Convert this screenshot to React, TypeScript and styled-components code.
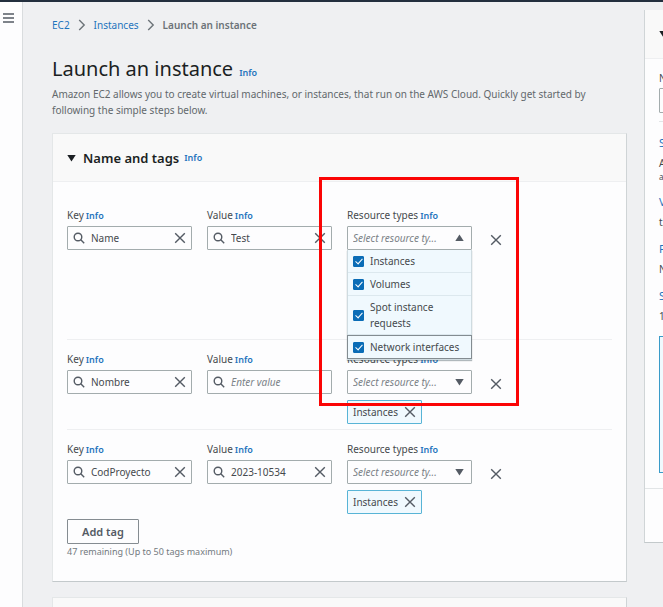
import React, { useState } from "react";
import styled, { createGlobalStyle, css } from "styled-components";

const color = {
  text: "#45494d",
  heading: "#1b1f23",
  muted: "#62686c",
  link: "#1f74bd",
  border: "#a3acad",
  divider: "#eeeff1",
  page: "#eff0f2",
  surface: "#fdfdfe",
  header: "#f9f9f9",
};

const GlobalStyle = createGlobalStyle`
  *, *::before, *::after { box-sizing: border-box; }
  html, body, #root { min-height: 100vh; }
  body {
    margin: 0;
    overflow: hidden;
    background: ${color.page};
    color: ${color.text};
    font: 10px/16px "Noto Sans", "Open Sans", sans-serif;
  }
  h1, h2, p, ol, ul, dl, dd { margin: 0; padding: 0; list-style: none; }
  button, input, select { font: inherit; color: inherit; margin: 0; }
  svg { flex: none; }
`;

const Shell = styled.div`
  display: flex;
  height: 100vh;
  overflow: hidden;
  border-top: 2px solid #232f3e;
`;

const NavRail = styled.nav`
  flex: 0 0 23px;
  padding-top: 9px;
  background: ${color.surface};
  border-right: 1px solid #d9dcde;
`;

const IconButton = styled.button`
  display: inline-flex;
  align-items: center;
  justify-content: center;
  flex: none;
  padding: 0;
  border: 0;
  background: none;
  color: #545b64;
  cursor: pointer;
`;

const MenuButton = styled(IconButton)`
  width: 16px;
  height: 14px;
`;

const Columns = styled.div`
  display: grid;
  grid-template-columns: minmax(0, 1fr) 19px;
  gap: 17px;
  flex: 1;
  min-width: 0;
  align-items: start;
  padding-left: 29px;
`;

const MainColumn = styled.main`
  display: flex;
  flex-direction: column;
  gap: 15px;
  padding-top: 15px;
`;

const PageHeader = styled.header`
  display: flex;
  flex-direction: column;
`;

const Breadcrumbs = styled.ol`
  display: flex;
  align-items: center;
  margin-bottom: 23px;
`;

const Crumb = styled.li`
  display: flex;
  align-items: center;
  font-weight: ${(p) => (p["aria-current"] ? 600 : 400)};
  color: #6c7378;
  svg { margin: 0 8px; }
`;

const Link = styled.a`
  color: ${color.link};
  text-decoration: none;
`;

const InfoLink = styled(Link)<{ $gap?: number }>`
  margin-left: ${(p) => p.$gap ?? 2}px;
  font-size: 9px;
  line-height: 12px;
  font-weight: 600;
`;

const Title = styled.h1`
  height: 26px;
  margin-bottom: 4px;
  font-size: 20px;
  line-height: 26px;
  font-weight: 400;
  color: ${color.heading};
`;

const Intro = styled.p`
  color: ${color.muted};
`;

const Card = styled.section`
  background: ${color.surface};
  border: 1px solid #e4e7e8;
  border-right-color: #cfd4d6;
  border-bottom-color: #c3c9cb;
`;

const CardHeader = styled.header`
  display: flex;
  align-items: center;
  height: 48px;
  padding: 0 14px;
  background: ${color.header};
  border-bottom: 1px solid ${color.divider};
  color: ${color.heading};
`;

const CardTitle = styled.h2`
  margin-left: 7px;
  font-size: 13px;
  line-height: 18px;
  font-weight: 600;
`;

const CardBody = styled.div`
  padding: 25px 14px 21px;
`;

const TagRow = styled.div<{ $expanded?: boolean }>`
  display: grid;
  grid-template-columns: repeat(4, minmax(0, 1fr));
  gap: 15px;
  align-items: start;
  min-height: ${(p) => (p.$expanded ? 132 : 78)}px;

  & + & {
    padding-top: 11px;
    min-height: 90px;
    border-top: 1px solid ${color.divider};
  }
`;

const Cell = styled.div`
  position: relative;
  min-width: 0;
`;

const Label = styled.div`
  height: 16px;
  margin-bottom: 3px;
  white-space: nowrap;
`;

const Field = styled.div`
  display: flex;
  align-items: center;
  height: 24px;
  padding: 0 5px;
  border: 1px solid ${color.border};
  border-radius: 1px;
  color: #545b64;
`;

const TextInput = styled.input`
  flex: 1;
  min-width: 0;
  padding: 0 0 0 6px;
  border: 0;
  outline: 0;
  background: none;
  color: ${color.text};
  &::placeholder { color: #7b8287; font-style: italic; opacity: 1; }
`;

const SelectBox = styled.select`
  flex: 1;
  min-width: 0;
  padding: 0;
  border: 0;
  outline: 0;
  appearance: none;
  background: none;
  color: #7b8287;
  font-style: italic;
  & + svg { margin-right: 2px; }
`;

const Menu = styled.ul`
  position: absolute;
  z-index: 2;
  top: 43px;
  left: 0;
  right: 0;
  background: #f0f9fe;
  border: 1px solid #cfdbe0;
  border-top: 0;
  box-shadow: 0 1px 1px rgba(0, 28, 36, 0.3);
`;

const OptionLabel = styled.label`
  display: flex;
  align-items: center;
  gap: 6px;
  padding: 3px 5px;
`;

const Option = styled.li<{ $active?: boolean }>`
  border-bottom: 1px solid #dce8ee;
  ${(p) =>
    p.$active &&
    css`
      margin: 0 -1px;
      border: 1px solid #838c91;
    `}
`;

const Checkbox = styled.input`
  flex: none;
  appearance: none;
  width: 11px;
  height: 11px;
  border: 1px solid #0a6cb6;
  border-radius: 1px;
  background: #fff;
  display: grid;
  place-items: center;

  &:checked { background: #0a6cb6; }
  &:checked::after {
    content: "";
    width: 4px;
    height: 7px;
    margin-top: -2px;
    border: solid #fff;
    border-width: 0 1px 1px 0;
    transform: rotate(42deg);
  }
`;

const Highlight = styled.div`
  position: absolute;
  z-index: 3;
  top: -30px;
  left: -28px;
  right: -47px;
  height: 229px;
  border: 3px solid #fb0505;
  pointer-events: none;
`;

const Token = styled.div`
  display: inline-flex;
  align-items: center;
  gap: 6px;
  height: 24px;
  margin-top: 6px;
  padding: 0 5px;
  border: 1px solid #58b4d6;
  border-radius: 1px;
  background: #f0f9fe;
  vertical-align: top;
`;

const RemoveButton = styled(IconButton)`
  width: 18px;
  height: 24px;
  margin-top: 21px;
`;

const AddButton = styled.button`
  display: block;
  height: 25px;
  padding: 0 14px;
  border: 1px solid #858c91;
  border-radius: 1px;
  background: ${color.surface};
  color: #545b64;
  font-size: 11px;
  font-weight: 600;
`;

const Hint = styled.p`
  font-size: 9px;
  color: #737a7f;
`;

const Summary = styled.aside`
  margin-top: 8px;
  overflow: hidden;
  background: ${color.surface};
  border-left: 1px solid #d0d5d7;
  border-bottom: 1px solid #c3c9cb;
  white-space: nowrap;
`;

const SummaryHeader = styled(CardHeader)`
  height: 49px;
`;

const SummaryBody = styled.div`
  padding: 11px 0 15px 14px;
`;

const CountInput = styled.input`
  display: block;
  width: 220px;
  height: 25px;
  margin-top: 2px;
  padding: 0 6px;
  border: 1px solid ${color.border};
  border-radius: 1px;
  background: ${color.surface};
`;

const Details = styled.dl`
  margin-top: 8px;
  padding-top: 13px;
  border-top: 1px solid #e2e5e7;
`;

const Term = styled.dt`
  font-size: 11px;
  margin-bottom: 4px;
`;

const Detail = styled.dd<{ $small?: boolean }>`
  font-size: ${(p) => (p.$small ? 8 : 10)}px;
  line-height: ${(p) => (p.$small ? 12 : 16)}px;
  & + dt { margin-top: 11px; }
`;

const Notice = styled.div`
  width: 220px;
  height: 137px;
  margin-top: 12px;
  border: 1px solid #3a9bc9;
  background: #f0f9fe;
`;

const SummaryFooter = styled.footer`
  height: 54px;
  border-top: 1px solid #e2e5e7;
`;

const Cross = () => (
  <svg width="12" height="12" viewBox="0 0 12 12" fill="none" stroke="currentColor" strokeWidth="1.4" aria-hidden="true">
    <path d="M1.2 1.2 10.8 10.8M10.8 1.2 1.2 10.8" />
  </svg>
);

const Magnifier = () => (
  <svg width="12" height="12" viewBox="0 0 12 12" fill="none" stroke="currentColor" strokeWidth="1.4" aria-hidden="true">
    <circle cx="5" cy="5" r="3.8" />
    <path d="m7.8 7.8 3.4 3.4" />
  </svg>
);

const Caret = ({ up }: { up?: boolean }) => (
  <svg width="9" height="8" viewBox="0 0 9 8" fill="currentColor" aria-hidden="true">
    <path d={up ? "M.3 7 4.5.6 8.7 7z" : "M.3 1h8.4L4.5 7.4z"} />
  </svg>
);

const Chevron = () => (
  <svg width="8" height="12" viewBox="0 0 8 12" fill="none" stroke="#6c7378" strokeWidth="1.4" aria-hidden="true">
    <path d="m1.2 1 5 5-5 5" />
  </svg>
);

const resourceTypes = ["Instances", "Volumes", "Spot instance requests", "Network interfaces"];

type Tag = { id: string; key: string; value: string; open?: boolean; types: string[] };

const initialTags: Tag[] = [
  { id: "tag1", key: "Name", value: "Test", open: true, types: resourceTypes },
  { id: "tag2", key: "Nombre", value: "", types: ["Instances"] },
  { id: "tag3", key: "CodProyecto", value: "2023-10534", types: ["Instances"] },
];

const Info = ({ gap }: { gap?: number }) => (
  <InfoLink href="#info" $gap={gap}>Info</InfoLink>
);

function SearchField({ id, label, initial }: { id: string; label: string; initial: string }) {
  const [text, setText] = useState(initial);
  return (
    <Cell>
      <Label>
        <label htmlFor={id}>{label}</label>
        <Info />
      </Label>
      <Field>
        <Magnifier />
        <TextInput
          id={id}
          value={text}
          placeholder={`Enter ${label.toLowerCase()}`}
          onChange={(e) => setText(e.target.value)}
        />
        {text && (
          <IconButton type="button" aria-label={`Clear ${label.toLowerCase()}`} onClick={() => setText("")}>
            <Cross />
          </IconButton>
        )}
      </Field>
    </Cell>
  );
}

function ResourceField({ tag }: { tag: Tag }) {
  const [types, setTypes] = useState(tag.types);
  const toggle = (t: string) =>
    setTypes((all) => (all.includes(t) ? all.filter((x) => x !== t) : [...all, t]));
  const id = `${tag.id}-types`;
  return (
    <Cell>
      <Label>
        <label htmlFor={id}>Resource types</label>
        <Info />
      </Label>
      <Field>
        <SelectBox id={id} value="" onChange={(e) => toggle(e.target.value)}>
          <option value="">Select resource ty...</option>
          {!tag.open && resourceTypes.map((t) => <option key={t}>{t}</option>)}
        </SelectBox>
        <Caret up={tag.open} />
      </Field>
      {tag.open ? (
        <>
          <Menu>
            {resourceTypes.map((t, i) => (
              <Option key={t} $active={i === resourceTypes.length - 1}>
                <OptionLabel>
                  <Checkbox type="checkbox" checked={types.includes(t)} onChange={() => toggle(t)} />
                  {t}
                </OptionLabel>
              </Option>
            ))}
          </Menu>
          <Highlight />
        </>
      ) : (
        types.map((t) => (
          <Token key={t}>
            {t}
            <IconButton type="button" aria-label={`Remove ${t}`} onClick={() => toggle(t)}>
              <Cross />
            </IconButton>
          </Token>
        ))
      )}
    </Cell>
  );
}

export default function App() {
  const [tags, setTags] = useState(initialTags);
  return (
    <>
      <GlobalStyle />
      <Shell>
        <NavRail aria-label="Services">
          <MenuButton type="button" aria-label="Open navigation">
            <svg width="11" height="10" viewBox="0 0 11 10" stroke="currentColor" strokeWidth="1.3" aria-hidden="true">
              <path d="M0 1h11M0 5h11M0 9h11" />
            </svg>
          </MenuButton>
        </NavRail>
        <Columns>
          <MainColumn>
            <PageHeader>
              <Breadcrumbs>
                <Crumb><Link href="#ec2">EC2</Link><Chevron /></Crumb>
                <Crumb><Link href="#instances">Instances</Link><Chevron /></Crumb>
                <Crumb aria-current="page">Launch an instance</Crumb>
              </Breadcrumbs>
              <Title>Launch an instance<Info gap={6} /></Title>
              <Intro>
                Amazon EC2 allows you to create virtual machines, or instances, that run on the AWS Cloud. Quickly get started by
                following the simple steps below.
              </Intro>
            </PageHeader>
            <Card>
              <CardHeader>
                <Caret />
                <CardTitle>Name and tags</CardTitle>
                <Info gap={5} />
              </CardHeader>
              <CardBody>
                {tags.map((tag) => (
                  <TagRow key={tag.id} $expanded={tag.open}>
                    <SearchField id={`${tag.id}-key`} label="Key" initial={tag.key} />
                    <SearchField id={`${tag.id}-value`} label="Value" initial={tag.value} />
                    <ResourceField tag={tag} />
                    <RemoveButton
                      type="button"
                      aria-label={`Remove tag ${tag.key}`}
                      onClick={() => setTags((all) => all.filter((x) => x.id !== tag.id))}
                    >
                      <Cross />
                    </RemoveButton>
                  </TagRow>
                ))}
                <AddButton
                  type="button"
                  onClick={() => setTags((all) => [...all, { id: `tag${Date.now()}`, key: "", value: "", types: ["Instances"] }])}
                >
                  Add tag
                </AddButton>
                <Hint>47 remaining (Up to 50 tags maximum)</Hint>
              </CardBody>
            </Card>
            <Card>
              <CardHeader />
            </Card>
          </MainColumn>
          <Summary aria-label="Summary">
            <SummaryHeader><Caret /></SummaryHeader>
            <SummaryBody>
              <label htmlFor="count">Number of instances</label>
              <CountInput id="count" defaultValue="1" />
              <Details>
                <Term><Link href="#ami">Software Image (AMI)</Link></Term>
                <Detail>Amazon Linux</Detail>
                <Detail $small>ami</Detail>
                <Term><Link href="#type">Virtual server type</Link></Term>
                <Detail>t2.micro</Detail>
                <Term><Link href="#firewall">Firewall</Link></Term>
                <Detail>New security group</Detail>
                <Term><Link href="#storage">Storage</Link></Term>
                <Detail>1 volume</Detail>
              </Details>
              <Notice />
            </SummaryBody>
            <SummaryFooter />
          </Summary>
        </Columns>
      </Shell>
    </>
  );
}
